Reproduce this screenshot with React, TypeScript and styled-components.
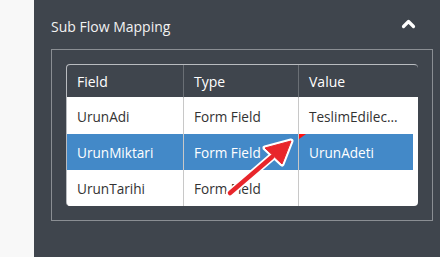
import styled, { createGlobalStyle } from 'styled-components';

const GlobalStyle = createGlobalStyle`
  html, body {
    margin: 0;
    padding: 0;
    background: #f8f8f8;
    font-family: "Open Sans", "Noto Sans", sans-serif;
  }
`;

const Page = styled.div`
  width: 440px;
  height: 257px;
  display: flex;
  overflow: hidden;
`;

const Gutter = styled.div`
  width: 34px;
  flex: none;
  background: #f8f8f8;
`;

const Panel = styled.div`
  flex: 1;
  background: #3f454d;
  padding: 12px 7px 0 17px;
  box-sizing: border-box;
`;

const PanelHeader = styled.div`
  height: 28px;
  display: flex;
  align-items: center;
  justify-content: space-between;
  padding-right: 17px;
  margin-bottom: 9px;
`;

const Title = styled.span`
  color: #f2f2f2;
  font-size: 14px;
`;

const Chevron = styled.svg`
  margin-bottom: 5px;
`;

const Frame = styled.div`
  position: relative;
  border: 1px solid #8a8e93;
  padding: 14px 14px 13px 14px;
  height: 172px;
  box-sizing: border-box;
`;

const Table = styled.div`
  background: #fff;
  border-radius: 4px;
  overflow: hidden;
  border-top: 1px solid #b9bcc0;
  border-left: 1px solid #b9bcc0;
  padding-right: 5px;
  background-clip: padding-box;
`;

const Row = styled.div<{ $kind: 'head' | 'plain' | 'active' }>`
  display: grid;
  grid-template-columns: 117px 115px 1fr;
  height: ${p => (p.$kind === 'head' ? '33px' : '36px')};
  background: ${p => (p.$kind === 'head' ? '#3f454d' : p.$kind === 'active' ? '#4389c8' : '#fff')};
  color: ${p => (p.$kind === 'plain' ? '#333' : '#fff')};
  margin-right: ${p => (p.$kind === 'head' ? '-5px' : '0')};
`;

const Cell = styled.div<{ $last?: boolean; $head?: boolean }>`
  position: relative;
  display: flex;
  align-items: center;
  padding-left: 10px;
  font-size: ${p => (p.$head ? '14px' : '13.6px')};
  white-space: nowrap;
  overflow: hidden;
  border-right: ${p => (p.$last ? 'none' : p.$head ? '1px solid #6a6f75' : '1px solid #c8c8c8')};
  ${p => (p.$head ? 'border-bottom: 1px solid #fff;' : '')}
`;

// small red "changed" marker in the top-left corner of a cell
const Marker = styled.span`
  position: absolute;
  left: 0;
  top: 0;
  width: 0;
  height: 0;
  border-top: 5px solid #ff1010;
  border-right: 7px solid transparent;
`;

const Arrow = styled.svg`
  position: absolute;
  left: 164px;
  top: 70px;
  pointer-events: none;
`;

const rows = [
  { field: 'UrunAdi', type: 'Form Field', value: 'TeslimEdilec...', active: false },
  { field: 'UrunMiktari', type: 'Form Field', value: 'UrunAdeti', active: true },
  { field: 'UrunTarihi', type: 'Form Field', value: '', active: false },
];

export default function App() {
  return (
    <Page>
      <GlobalStyle />
      <Gutter />
      <Panel>
        <PanelHeader>
          <Title>Sub Flow Mapping</Title>
          <Chevron width="15" height="10" viewBox="0 0 15 10">
            <path d="M2.5 7.5 L7.5 2.5 L12.5 7.5" fill="none" stroke="#fff" strokeWidth="3.2" strokeLinecap="round" strokeLinejoin="round" />
          </Chevron>
        </PanelHeader>
        <Frame>
          <Table>
            <Row $kind="head">
              <Cell $head>Field</Cell>
              <Cell $head>Type</Cell>
              <Cell $head $last>Value</Cell>
            </Row>
            {rows.map(r => (
              <Row key={r.field} $kind={r.active ? 'active' : 'plain'}>
                <Cell>{r.field}</Cell>
                <Cell>{r.type}</Cell>
                <Cell $last>
                  {r.active && <Marker />}
                  {r.value}
                </Cell>
              </Row>
            ))}
          </Table>
          <Arrow width="90" height="90" viewBox="0 0 90 90">
            <path d="M14 73 L57 36" stroke="#fff" strokeWidth="8" strokeLinecap="round" />
            <path d="M75 21 L49 28 L66 44 Z" fill="#fff" stroke="#fff" strokeWidth="5" strokeLinejoin="round" />
            <path d="M14 73 L56 37" stroke="#e8262b" strokeWidth="4.5" strokeLinecap="round" />
            <path d="M75 21 L49 28 L66 44 Z" fill="#e8262b" stroke="#e8262b" strokeWidth="1" strokeLinejoin="round" />
          </Arrow>
        </Frame>
      </Panel>
    </Page>
  );
}
